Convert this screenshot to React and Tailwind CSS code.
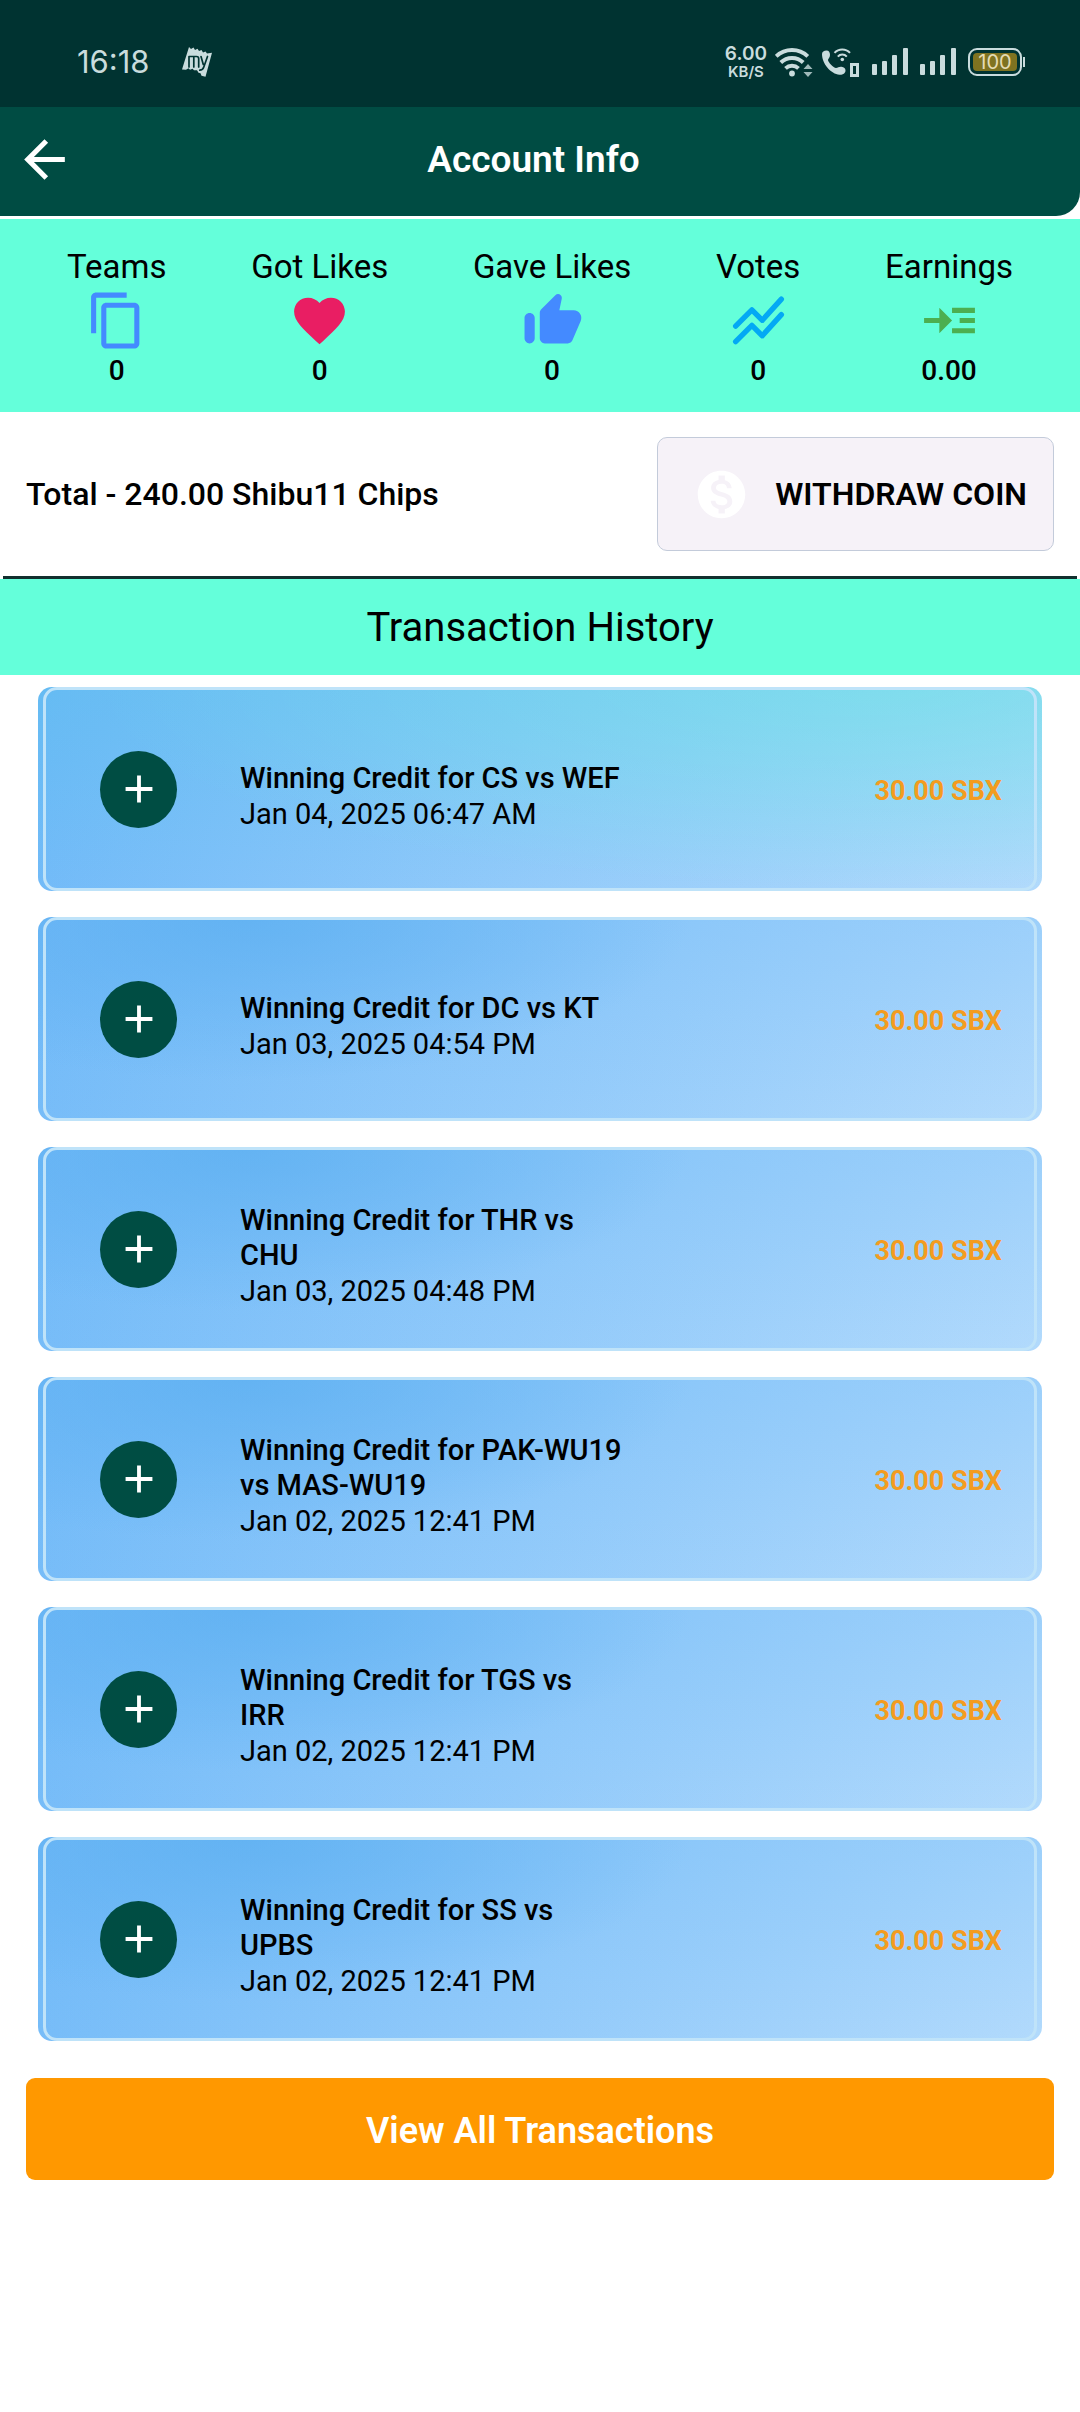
import { useState } from 'react';
import { MdAdd, MdArrowBack, MdContentCopy, MdFavorite, MdMonetizationOn, MdReadMore } from 'react-icons/md';

const transactions = [
  { id: 1, title: 'Winning Credit for CS vs WEF', date: 'Jan 04, 2025 06:47 AM', amount: '30.00 SBX' },
  { id: 2, title: 'Winning Credit for DC vs KT', date: 'Jan 03, 2025 04:54 PM', amount: '30.00 SBX' },
  { id: 3, title: 'Winning Credit for THR vs\nCHU', date: 'Jan 03, 2025 04:48 PM', amount: '30.00 SBX' },
  { id: 4, title: 'Winning Credit for PAK-WU19\nvs MAS-WU19', date: 'Jan 02, 2025 12:41 PM', amount: '30.00 SBX' },
  { id: 5, title: 'Winning Credit for TGS vs\nIRR', date: 'Jan 02, 2025 12:41 PM', amount: '30.00 SBX' },
  { id: 6, title: 'Winning Credit for SS vs\nUPBS', date: 'Jan 02, 2025 12:41 PM', amount: '30.00 SBX' },
];

function ThumbUpRounded({ className }) {
  return (
    <svg viewBox="0 0 24 24" fill="currentColor" className={className} aria-hidden="true">
      <path d="M13.12 2.06 7.58 7.6c-.37.37-.58.88-.58 1.41V19c0 1.1.9 2 2 2h9c.8 0 1.52-.48 1.84-1.21l3.26-7.61C23.94 10.2 22.49 8 20.34 8h-5.65l.95-4.58c.1-.5-.05-1.01-.41-1.37-.59-.58-1.53-.58-2.11.01zM3 21c1.1 0 2-.9 2-2v-8c0-1.1-.9-2-2-2s-2 .9-2 2v8c0 1.1.9 2 2 2z" />
    </svg>
  );
}

function StackedLines({ className }) {
  return (
    <svg
      viewBox="0 0 24 24"
      fill="none"
      stroke="currentColor"
      strokeWidth="2.1"
      strokeLinecap="round"
      strokeLinejoin="round"
      className={className}
      aria-hidden="true"
    >
      <path d="M3 14.200 9.400 7.800 13.500 11.900 21 3.600" />
      <path d="M3 20.300 9.400 13.900 13.500 18 21 9.700" />
    </svg>
  );
}

const stats = [
  { label: 'Teams', value: '0', Icon: MdContentCopy, color: 'text-[#448aff]' },
  { label: 'Got Likes', value: '0', Icon: MdFavorite, color: 'text-[#e91e63]' },
  { label: 'Gave Likes', value: '0', Icon: ThumbUpRounded, color: 'text-[#448aff]' },
  { label: 'Votes', value: '0', Icon: StackedLines, color: 'text-[#03a9f4]' },
  { label: 'Earnings', value: '0.00', Icon: MdReadMore, color: 'text-[#4caf50]' },
];

function TicketIcon() {
  return (
    <svg viewBox="0 0 30 30" className="w-[30px] h-[30px]" aria-hidden="true">
      <path
        fill="#c9dcdd"
        d="M7 0l2 2 2.500-1.500L13 3l2.500-1.200L17 4l2.500-1L21 5.500l2.500-1L25 6.500l5-.8-6.500 24-4-1-1-2.500-2-.5-1.500-2.500-3 0-1.500-1.500-2.500 1-1.500-1.500-2.500 1.500L0 22.500z"
      />
      <path
        fill="none"
        stroke="#003331"
        strokeWidth="1.700"
        strokeLinecap="round"
        strokeLinejoin="round"
        d="M7 20V9.500h7.500c1.500 0 2.200.8 2.200 2.200V20M11.800 10v10M19 9.500l2.300 8M25.500 9.500 21.800 20c-.7 2.200-2 3.200-4 3.200"
      />
    </svg>
  );
}

function WifiIcon() {
  return (
    <svg viewBox="0 0 38 30" className="w-[38px] h-[30px]" aria-hidden="true">
      <g fill="none" stroke="#c9dcdd" strokeWidth="3.900">
        <path d="M1.200 9.300a23 23 0 0 1 31.600 0" />
        <path d="M5.800 15.500a16 16 0 0 1 22.400 0" />
        <path d="M10.500 21.300a9.500 9.500 0 0 1 13 0" />
      </g>
      <circle cx="17" cy="26.500" r="2.900" fill="#c9dcdd" />
      <path fill="#9fb9b9" d="M33 17l4.500 5h-9zM33 30l-4.500-5h9z" />
    </svg>
  );
}

function CallIcon() {
  return (
    <svg viewBox="0 0 39 30" className="w-[39px] h-[30px]" aria-hidden="true">
      <path
        fill="#c9dcdd"
        d="M1 7c0-2 2-3.500 4.500-3.500 2.500 0 3.500 2 3.500 4.500s-2 3.500-2 5c0 2 5.500 8 8 8 2 0 3-1.500 5.500-1.200 2.500.4 4 1.700 4 3.700 0 3-3 4.500-6 4.200C10 27 1 17 1 7z"
      />
      <g fill="none" stroke="#c9dcdd" strokeWidth="2">
        <path d="M13.500 5.800a10.500 10.500 0 0 1 15.500 0" />
        <path d="M16.800 9.600a6 6 0 0 1 9 0" />
      </g>
      <circle cx="21.300" cy="12.500" r="1.800" fill="#c9dcdd" />
      <path fill="none" stroke="#c9dcdd" strokeWidth="3" d="M30.500 17.500h6v11h-6z" />
    </svg>
  );
}

function SignalIcon() {
  return (
    <svg viewBox="0 0 36 28" fill="#c9dcdd" className="w-[36px] h-[28px]" aria-hidden="true">
      <rect x="0" y="16" width="5" height="11" rx="1" />
      <rect x="10" y="13" width="5" height="14" rx="1" />
      <rect x="20" y="7" width="5" height="20" rx="1" />
      <rect x="31" y="0" width="5" height="27" rx="1" />
    </svg>
  );
}

function StatusBar() {
  return (
    <div className="flex items-center justify-between h-[107px] pt-4 pl-[77px] pr-[55px] bg-[#003331] text-[#c9dcdd]">
      <div className="flex items-center gap-8">
        <span className="font-[Inter] text-[31px] leading-[36px]">16:18</span>
        <TicketIcon />
      </div>
      <div className="flex items-center">
        <div className="flex flex-col items-center mr-2 font-[Inter] font-semibold">
          <span className="text-[19px] leading-[20px]">6.00</span>
          <span className="text-[15px] leading-[16px]">KB/S</span>
        </div>
        <WifiIcon />
        <div className="ml-2 mr-3">
          <CallIcon />
        </div>
        <div className="flex gap-3 mr-3">
          <SignalIcon />
          <SignalIcon />
        </div>
        <div className="flex items-center gap-px">
          <div className="w-[54px] h-[28px] p-[3px] border-2 border-[#c9dcdd] rounded-[9px]">
            <div className="flex items-center justify-center h-full rounded-[4px] bg-[#7f7320] font-[Inter] text-[20px] leading-[18px] text-[#e5dcb4]">
              100
            </div>
          </div>
          <div className="w-[2px] h-[10px] bg-[#c9dcdd]" />
        </div>
      </div>
    </div>
  );
}

function TransactionCard({ item, highlighted }) {
  return (
    <li
      className={`h-[204px] px-[5px] rounded-[14px] ${
        highlighted
          ? 'bg-[radial-gradient(ellipse_80%_100%_at_85%_0%,#64ffda4d,#64ffda00),linear-gradient(180deg,#50c0e850,#50c0e800),linear-gradient(105deg,#6fb9f8,#92cafa_50%,#b2dafc)]'
          : 'bg-[radial-gradient(ellipse_45%_80%_at_20%_0%,#5aaef0b0,#5aaef000),linear-gradient(180deg,#64b5f640,#64b5f600),linear-gradient(105deg,#74bbf8,#92cafa_50%,#b2dafc)]'
      }`}
    >
      <div className="flex items-center h-full pl-[54px] pr-8 rounded-[14px] border-[3px] border-[#bfe3f9]">
        <div className="flex items-center justify-center w-[77px] h-[77px] mr-[63px] rounded-full bg-[#004d43]">
          <MdAdd className="w-[46px] h-[46px] text-white" />
        </div>
        <div className="flex-1 pt-[14px]">
          <p className="text-[29px] leading-[35px] font-medium whitespace-pre-line">{item.title}</p>
          <p className="text-[29px] leading-[36px]">{item.date}</p>
        </div>
        <span className="pt-1 text-[27px] leading-[36px] font-bold text-[#f39c1f]">{item.amount}</span>
      </div>
    </li>
  );
}

export default function App() {
  const [showAll, setShowAll] = useState(false);

  return (
    <div className="min-h-screen bg-white font-[Roboto,sans-serif] text-black">
      <StatusBar />
      <header className="flex items-center h-[109px] px-[14px] pb-1 rounded-br-[24px] bg-[#004c43] text-white">
        <button type="button" aria-label="Back">
          <MdArrowBack className="w-[61px] h-[61px]" />
        </button>
        <h1 className="flex-1 pr-[74px] text-center text-[37px] leading-[44px] font-semibold">Account Info</h1>
      </header>

      <section className="flex justify-between mt-[3px] px-[67px] pt-[28px] pb-[22px] bg-[#64ffda]">
        {stats.map(({ label, value, Icon, color }) => (
          <div key={label} className="flex flex-col items-center">
            <span className="text-[33px] leading-[40px]">{label}</span>
            <Icon className={`w-[61px] h-[61px] mt-[3px] ${color}`} />
            <span className="text-[28px] leading-[39px] font-medium">{value}</span>
          </div>
        ))}
      </section>

      <section className="flex items-center justify-between px-[26px] py-[25px]">
        <p className="text-[32px] leading-[40px] font-medium">Total - 240.00 Shibu11 Chips</p>
        <button
          type="button"
          className="flex items-center justify-between w-[397px] h-[114px] pl-[35px] pr-[26px] rounded-[10px] border border-[#c3cbda] bg-[#f6f2f8]"
        >
          <MdMonetizationOn className="w-[57px] h-[57px] text-white" />
          <span className="text-[32px] leading-[40px] font-semibold">WITHDRAW COIN</span>
        </button>
      </section>

      <hr className="h-[3px] mx-[3px] border-0 bg-[#12302e]" />

      <h2 className="bg-[#64ffda] pt-[25px] pb-[23px] text-center text-[40px] leading-[48px]">Transaction History</h2>

      <ul className="flex flex-col gap-[26px] px-[38px] pt-3">
        {transactions.map((item, i) => (
          <TransactionCard key={item.id} item={item} highlighted={i === 0} />
        ))}
      </ul>

      <div className="px-[26px] pt-[37px] pb-10">
        <button
          type="button"
          onClick={() => setShowAll(!showAll)}
          className="w-full h-[102px] pt-1 rounded-[9px] bg-[#ff9800] text-[36px] leading-[44px] font-semibold text-white"
        >
          View All Transactions
        </button>
      </div>
    </div>
  );
}
